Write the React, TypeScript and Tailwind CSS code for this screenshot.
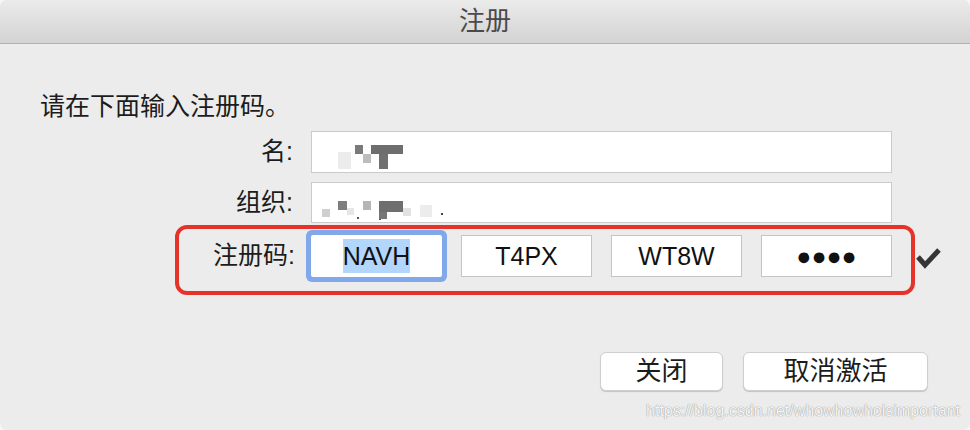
import React from "react";

const FONT = "font-['Liberation_Sans','Noto_Sans_CJK_SC',sans-serif]";

function Mosaic({ rects }: { rects: [number, number, number, number, string][] }) {
  return (
    <svg width="140" height="41" className="block" aria-hidden>
      {rects.map(([x, y, w, h, c], i) => (
        <rect key={i} x={x} y={y} width={w} height={h} fill={c} />
      ))}
    </svg>
  );
}

function CodeField({ value, focused }: { value: string; focused?: boolean }) {
  return (
    <div
      className={
        "w-[131px] h-[42px] bg-white flex items-center justify-center text-[25px] text-[#111] " +
        (focused
          ? "rounded-[2px] shadow-[0_0_0_5px_#81a8ea]"
          : "border border-[#c4c4c4]")
      }
    >
      {focused ? (
        <span className="bg-[#b3d6fd] leading-[34px] px-0">{value}</span>
      ) : (
        <span className="leading-[34px]">{value}</span>
      )}
    </div>
  );
}

export default function App() {
  return (
    <div className={"w-[970px] h-[430px] bg-[#f7f7f7] " + FONT}>
      <div className="relative w-full h-full rounded-[7px] bg-[#ececec] overflow-hidden flex flex-col">
        <div className="h-[44px] shrink-0 border-b border-[#b3b3b3] bg-gradient-to-b from-[#ebebeb] to-[#d3d3d3] flex items-center justify-center text-[26px] text-[#4a4a4a]">
          注册
        </div>

        <div className="pl-[40px] flex flex-col">
          <div className="mt-[48px] h-[28px] leading-[28px] text-[25px] text-[#1c1c1c]">
            请在下面输入注册码。
          </div>

          <div className="mt-[11px] flex items-center">
            <div className="w-[253px] text-right text-[25px] text-[#1c1c1c]">名:</div>
            <div className="ml-[18px] w-[581px] h-[42px] bg-white border border-[#cbcbcb] overflow-hidden">
              <Mosaic
                rects={[
                  [26, 20, 13, 17, "#ececec"],
                  [43, 13, 8, 9, "#7a7a7a"],
                  [51, 22, 8, 9, "#bdbdbd"],
                  [59, 13, 32, 9, "#6e6e6e"],
                  [67, 22, 9, 15, "#707070"],
                ]}
              />
            </div>
          </div>

          <div className="mt-[9px] flex items-center">
            <div className="w-[253px] text-right text-[25px] text-[#1c1c1c]">组织:</div>
            <div className="ml-[18px] w-[581px] h-[41px] bg-white border border-[#cbcbcb] overflow-hidden">
              <Mosaic
                rects={[
                  [10, 26, 8, 8, "#cfcfcf"],
                  [26, 18, 9, 9, "#7d7d7d"],
                  [35, 25, 7, 7, "#e6e6e6"],
                  [51, 18, 8, 9, "#b5b5b5"],
                  [67, 18, 24, 11, "#6f6f6f"],
                  [67, 29, 8, 7, "#777777"],
                  [91, 25, 8, 8, "#e2e2e2"],
                  [108, 22, 12, 12, "#ececec"],
                  [129, 30, 2, 2, "#444444"],
                  [45, 34, 2, 2, "#555555"],
                  [67, 36, 2, 1, "#555555"],
                ]}
              />
            </div>
          </div>

          <div className="mt-[2px] ml-[135px] flex items-center">
            <div className="w-[740px] h-[70px] border-4 border-[#e5332a] rounded-[12px] flex items-start pt-[6px]">
              <div className="w-[116px] h-[42px] flex items-center justify-end text-[25px] text-[#1c1c1c]">
                注册码:
              </div>
              <div className="ml-[16px] flex gap-[19px]">
                <CodeField value="NAVH" focused />
                <CodeField value="T4PX" />
                <CodeField value="WT8W" />
                <CodeField value="●●●●" />
              </div>
            </div>
            <svg width="26" height="24" viewBox="0 0 26 24" className="ml-[1px] mt-[-4px]" aria-hidden>
              <polyline
                points="2,11 9,19 23,4"
                fill="none"
                stroke="#353535"
                strokeWidth="5"
                strokeLinejoin="miter"
              />
            </svg>
          </div>
        </div>

        <div className="mt-[57px] flex justify-end gap-[20px] pr-[42px]">
          <button className="w-[123px] h-[39px] bg-white rounded-[6px] border border-[#cfcfcf] shadow-[0_1px_1px_rgba(0,0,0,0.18)] text-[26px] text-[#1c1c1c] flex items-center justify-center">
            关闭
          </button>
          <button className="w-[185px] h-[39px] bg-white rounded-[6px] border border-[#cfcfcf] shadow-[0_1px_1px_rgba(0,0,0,0.18)] text-[26px] text-[#1c1c1c] flex items-center justify-center">
            取消激活
          </button>
        </div>

        <div className="absolute right-[10px] bottom-[7px] text-[16px] text-white/90 [text-shadow:0_0_1px_#9a9a9a,0_0_1px_#9a9a9a]">
          https://blog.csdn.net/whowhowhoisimportant
        </div>
      </div>
    </div>
  );
}
